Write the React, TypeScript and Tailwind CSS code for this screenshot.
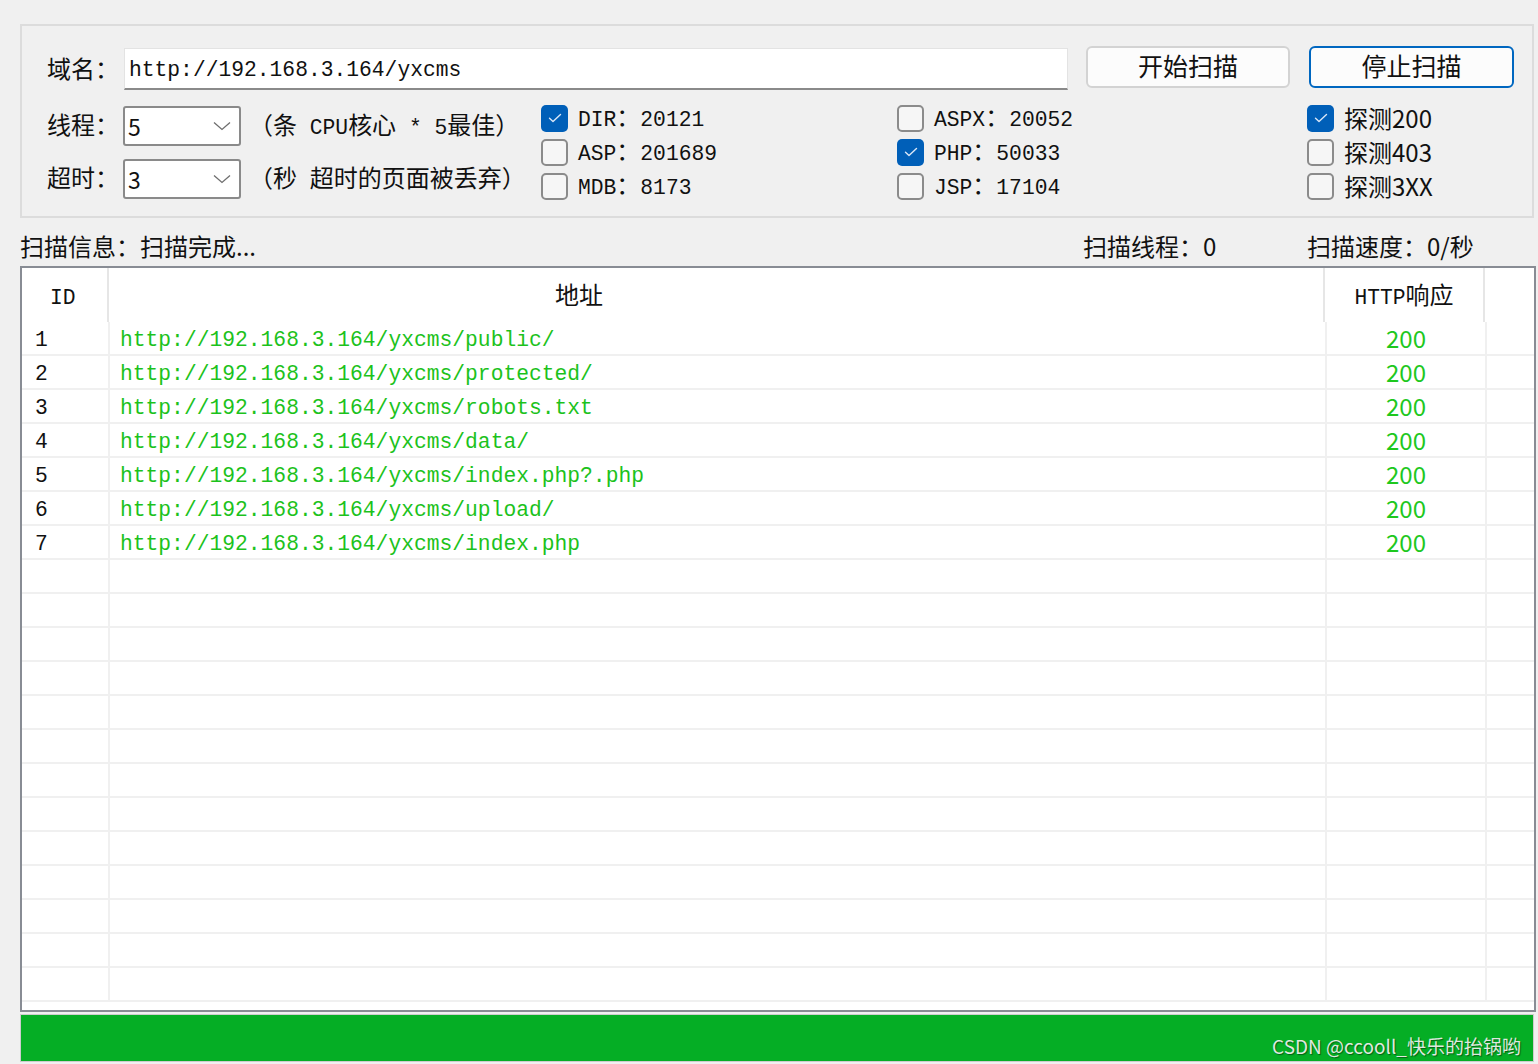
import type { ReactNode } from 'react';

const CJK = /([\u3000-\u303f\u4e00-\u9fff\uff00-\uffef]+)/;

// SimSun-like mix: CJK runs in Noto, latin runs in a mono face
function Song({ text, className = '' }: { text: string; className?: string }) {
  return (
    <span className={`inline-block whitespace-pre font-['Noto_Sans_CJK_SC',sans-serif] text-[24px] leading-[28px] ${className}`}>
      {text.split(CJK).map((part, i) =>
        i % 2 === 1 ? (
          <span key={i}>{part}</span>
        ) : (
          <span key={i} className="font-['Liberation_Mono',monospace] text-[21.3px]">
            {part}
          </span>
        ),
      )}
    </span>
  );
}

function Check({ checked, label }: { checked?: boolean; label: ReactNode }) {
  return (
    <div className="flex h-[34px] items-center">
      {checked ? (
        <span className="flex h-[27px] w-[27px] items-center justify-center rounded-[5px] bg-[#005fb8]">
          <svg width="14" height="10" viewBox="0 0 14 10" fill="none">
            <path d="M1.5 5.2 L5 8.5 L12.5 1.5" stroke="#dbe8f7" strokeWidth="1.4" strokeLinecap="round" strokeLinejoin="round" />
          </svg>
        </span>
      ) : (
        <span className="h-[27px] w-[27px] rounded-[5px] border-2 border-[#8b8b8b] bg-[#f6f6f6]" />
      )}
      <span className="ml-[10px] flex items-center">{label}</span>
    </div>
  );
}

function Select({ value }: { value: string }) {
  return (
    <div className="flex h-[40px] w-[118px] items-center justify-between rounded-[3px] border-2 border-[#8a8a8a] bg-white pl-[3px] pr-[8px]">
      <span className="font-['Noto_Sans_CJK_SC',sans-serif] text-[23px] leading-none">{value}</span>
      <svg width="18" height="10" viewBox="0 0 18 10" fill="none">
        <path d="M1 1.5 L9 8.5 L17 1.5" stroke="#6e6e6e" strokeWidth="1.3" />
      </svg>
    </div>
  );
}

const urls = [
  'http://192.168.3.164/yxcms/public/',
  'http://192.168.3.164/yxcms/protected/',
  'http://192.168.3.164/yxcms/robots.txt',
  'http://192.168.3.164/yxcms/data/',
  'http://192.168.3.164/yxcms/index.php?.php',
  'http://192.168.3.164/yxcms/upload/',
  'http://192.168.3.164/yxcms/index.php',
];

const rows = Array.from({ length: 20 }, (_, i) => (i < urls.length ? { id: String(i + 1), url: urls[i] } : null));

const sans = "font-['Noto_Sans_CJK_SC',sans-serif]";

export default function App() {
  return (
    <div className="h-[1064px] w-[1538px] overflow-hidden bg-[#f0f0f0] pl-[20px] pt-[24px] text-[#111]">
      {/* options group */}
      <div className="h-[194px] w-[1514px] border-2 border-[#dcdcdc] pl-[25px] pr-[18px] pt-[20px]">
        <div className="flex h-[44px] items-start">
          <span className="mt-[8px] w-[77px]">
            <Song text="域名：" />
          </span>
          <div className="mt-[2px] flex h-[42px] w-[944px] items-center border border-b-2 border-[#e3e3e3] border-b-[#8a8a8a] bg-white pb-[2px] pl-[4px]">
            <Song text="http://192.168.3.164/yxcms" />
          </div>
          <button className={`ml-[18px] h-[42px] w-[204px] rounded-[6px] border-2 border-[#d3d3d3] bg-[#fcfcfc] pb-[3px] text-[25px] leading-none ${sans}`}>
            开始扫描
          </button>
          <button className={`ml-[19px] h-[42px] w-[205px] rounded-[6px] border-2 border-[#0067c0] bg-[#fcfcfc] pb-[3px] text-[25px] leading-none ${sans}`}>
            停止扫描
          </button>
        </div>

        <div className="mt-[11px] flex h-[102px]">
          <div className="w-[494px]">
            <div className="mt-[5px] flex h-[40px] items-center">
              <span className="w-[76px]">
                <Song text="线程：" />
              </span>
              <Select value="5" />
              <span className="ml-[8px]">
                <Song text="（条 CPU核心 * 5最佳）" />
              </span>
            </div>
            <div className="mt-[13px] flex h-[40px] items-center">
              <span className="w-[76px]">
                <Song text="超时：" />
              </span>
              <Select value="3" />
              <span className="ml-[8px]">
                <Song text="（秒 超时的页面被丢弃）" />
              </span>
            </div>
          </div>
          <div className="w-[356px]">
            <Check checked label={<Song text="DIR：20121" />} />
            <Check label={<Song text="ASP：201689" />} />
            <Check label={<Song text="MDB：8173" />} />
          </div>
          <div className="w-[410px]">
            <Check label={<Song text="ASPX：20052" />} />
            <Check checked label={<Song text="PHP：50033" />} />
            <Check label={<Song text="JSP：17104" />} />
          </div>
          <div>
            <Check checked label={<span className={`text-[24px] leading-none ${sans}`}>探测200</span>} />
            <Check label={<span className={`text-[24px] leading-none ${sans}`}>探测403</span>} />
            <Check label={<span className={`text-[24px] leading-none ${sans}`}>探测3XX</span>} />
          </div>
        </div>
      </div>

      {/* status */}
      <div className={`flex h-[48px] items-center pt-[8px] text-[24px] leading-none ${sans}`}>
        <span className="w-[1063px]">扫描信息：扫描完成...</span>
        <span className="w-[224px]">扫描线程：0</span>
        <span>扫描速度：0/秒</span>
      </div>

      {/* result table */}
      <div className="h-[746px] w-[1516px] border-2 border-[#888c94] bg-white">
        <div className="flex h-[54px]">
          <div className="flex w-[87px] items-center border-r-2 border-[#e6e6e6] pl-[28px] pt-[2px]">
            <Song text="ID" />
          </div>
          <div className="flex w-[1216px] items-center border-r-2 border-[#e6e6e6] pl-[446px] pt-[2px]">
            <Song text="地址" />
          </div>
          <div className="flex w-[160px] items-center justify-center border-r-2 border-[#e6e6e6] pt-[2px]">
            <Song text="HTTP响应" />
          </div>
        </div>
        {rows.map((row, i) => (
          <div key={i} className="flex h-[34px] border-b-2 border-[#f0f0f0]">
            <div className="flex w-[88px] items-center border-r-2 border-[#f0f0f0] pl-[13px]">
              {row && <Song text={row.id} />}
            </div>
            <div className="flex w-[1217px] items-center border-r-2 border-[#f0f0f0] pl-[10px] text-[#1cc21c]">
              {row && <Song text={row.url} />}
            </div>
            <div className="flex w-[160px] items-center justify-center border-r-2 border-[#f0f0f0]">
              {row && <span className={`text-[24px] leading-none text-[#1ec81e] ${sans}`}>200</span>}
            </div>
          </div>
        ))}
      </div>

      {/* progress */}
      <div className="mt-[2px] flex h-[48px] w-[1514px] items-end justify-end border border-[#cdcdcd] bg-[#05ae25] pb-[6px] pr-[12px]">
        <span className={`text-[19px] leading-none text-[#dfe9df] [text-shadow:1px_1px_1px_rgba(0,0,0,0.45)] ${sans}`}>
          CSDN @ccooll_快乐的抬锅哟
        </span>
      </div>
    </div>
  );
}
